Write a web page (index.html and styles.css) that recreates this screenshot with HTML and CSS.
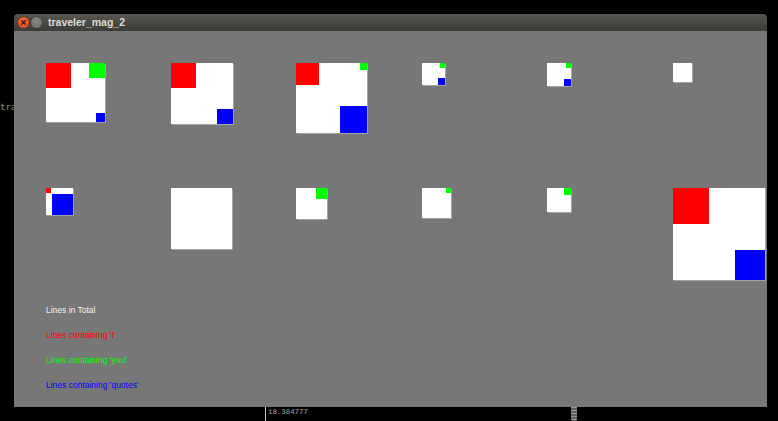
FILE: index.html
```html
<!DOCTYPE html>
<html>
<head>
<meta charset="utf-8">
<link rel="stylesheet" href="styles.css">
</head>
<body>
<div class="desktop">
  <div class="term-text">traveler_mag_2</div>
  <div class="term-bottom">
    <span class="divider"></span>
    <span class="value">18.384777</span>
    <span class="knob"></span>
  </div>

  <div class="window">
    <div class="titlebar">
      <span class="btn close"><svg width="11" height="11" viewBox="0 0 11 11"><path d="M3.7 3.7 L7.3 7.3 M7.3 3.7 L3.7 7.3" stroke="#3a1a10" stroke-width="1.3" stroke-linecap="round"/></svg></span>
      <span class="btn min"></span>
      <span class="title">traveler_mag_2</span>
    </div>
    <div class="content">
      <div class="grid">
        <div class="cell"><div class="sq" style="width:59px;height:59px"><i class="r" style="width:25px;height:25px"></i><i class="g" style="width:16px;height:15px"></i><i class="b" style="width:9px;height:9px"></i></div></div>
        <div class="cell"><div class="sq" style="width:62px;height:61px"><i class="r" style="width:25px;height:25px"></i><i class="b" style="width:16px;height:15px"></i></div></div>
        <div class="cell"><div class="sq" style="width:71px;height:70px"><i class="r" style="width:23px;height:22px"></i><i class="g" style="width:7px;height:7px"></i><i class="b" style="width:27px;height:27px"></i></div></div>
        <div class="cell"><div class="sq" style="width:23px;height:22px"><i class="g" style="width:5px;height:5px"></i><i class="b" style="width:7px;height:7px"></i></div></div>
        <div class="cell"><div class="sq" style="width:24px;height:23px"><i class="g" style="width:5px;height:5px"></i><i class="b" style="width:7px;height:7px"></i></div></div>
        <div class="cell"><div class="sq" style="width:19px;height:19px"></div></div>

        <div class="cell"><div class="sq" style="width:27px;height:27px"><i class="r" style="width:5px;height:5px"></i><i class="b" style="width:21px;height:21px"></i></div></div>
        <div class="cell"><div class="sq" style="width:61px;height:61px"></div></div>
        <div class="cell"><div class="sq" style="width:31px;height:31px"><i class="g" style="width:11px;height:11px"></i></div></div>
        <div class="cell"><div class="sq" style="width:29px;height:30px"><i class="g" style="width:5px;height:5px"></i></div></div>
        <div class="cell"><div class="sq" style="width:24px;height:24px"><i class="g" style="width:7px;height:7px"></i></div></div>
        <div class="cell"><div class="sq" style="width:92px;height:92px"><i class="r" style="width:36px;height:36px"></i><i class="b" style="width:30px;height:30px"></i></div></div>
      </div>
      <ul class="legend">
        <li class="l-total">Lines in Total</li>
        <li class="l-i">Lines containing 'I'</li>
        <li class="l-you">Lines containing 'you'</li>
        <li class="l-quotes">Lines containing 'quotes'</li>
      </ul>
    </div>
  </div>
</div>
</body>
</html>
```
FILE: styles.css
```css
html, body {
  margin: 0;
  padding: 0;
  background: #000;
  overflow: hidden;
}

.desktop {
  position: relative;
  width: 778px;
  height: 421px;
  background: #000;
}

.term-text {
  position: absolute;
  left: 0;
  top: 101px;
  font-family: "DejaVu Sans Mono", monospace;
  font-size: 9px;
  line-height: 12px;
  color: #8a8a8a;
}

.term-bottom {
  position: absolute;
  left: 0;
  top: 407px;
  width: 778px;
  height: 14px;
}

.term-bottom .divider {
  position: absolute;
  left: 265px;
  top: 0;
  width: 1px;
  height: 14px;
  background: #c8c8c8;
}

.term-bottom .value {
  position: absolute;
  left: 268px;
  top: 0;
  font-family: "Liberation Mono", monospace;
  font-size: 7.4px;
  line-height: 11px;
  color: #a9a898;
}

.term-bottom .knob {
  position: absolute;
  left: 571px;
  top: 0;
  width: 6px;
  height: 14px;
  background: repeating-linear-gradient(#9a9a9a 0 1px, #5e5e5e 1px 3px);
  border-radius: 0 0 2px 2px;
}

.window {
  position: absolute;
  left: 14px;
  top: 14px;
  width: 753px;
  height: 393px;
  display: flex;
  flex-direction: column;
}

.titlebar {
  height: 17px;
  flex: none;
  display: flex;
  align-items: center;
  background: linear-gradient(#57554e, #3d3c38);
  border-radius: 4px 4px 0 0;
  padding-left: 4px;
}

.btn {
  width: 11px;
  height: 11px;
  border-radius: 50%;
  flex: none;
  display: block;
}

.btn svg { display: block; }

.close {
  background: radial-gradient(circle at 50% 40%, #f26d3d, #d9451c);
  box-shadow: 0 0 0 0.5px #6a2a14;
}

.min {
  margin-left: 2px;
  background: radial-gradient(circle at 50% 40%, #8a8883, #6b6964);
  box-shadow: 0 0 0 0.5px #3a3936;
}

.title {
  margin-left: 6px;
  font-family: "Liberation Sans", sans-serif;
  font-weight: bold;
  font-size: 10.5px;
  color: #dfdbd2;
  line-height: 17px;
}

.content {
  flex: 1;
  background: #777777;
  padding: 32px 0 0 32px;
}

.grid {
  display: grid;
  grid-template-columns: 125px 125px 126px 125px 126px auto;
  grid-template-rows: 125px auto;
  align-items: start;
  justify-items: start;
}

.sq {
  position: relative;
  background: #fff;
  box-shadow: 1px 1px 0 #a4a4a4;
}

.sq i {
  position: absolute;
  display: block;
}

.sq .r { left: 0; top: 0; background: #ff0000; }
.sq .g { right: 0; top: 0; background: #00ff00; }
.sq .b { right: 0; bottom: 0; background: #0000ff; }

.legend {
  list-style: none;
  margin: 18px 0 0 0;
  padding: 0;
  font-family: "Liberation Sans", sans-serif;
  font-size: 8.5px;
  line-height: 25px;
}

.l-total { color: #f2f2f2; }
.l-i { color: #ff0000; }
.l-you { color: #00ff00; }
.l-quotes { color: #0000ff; }
```
